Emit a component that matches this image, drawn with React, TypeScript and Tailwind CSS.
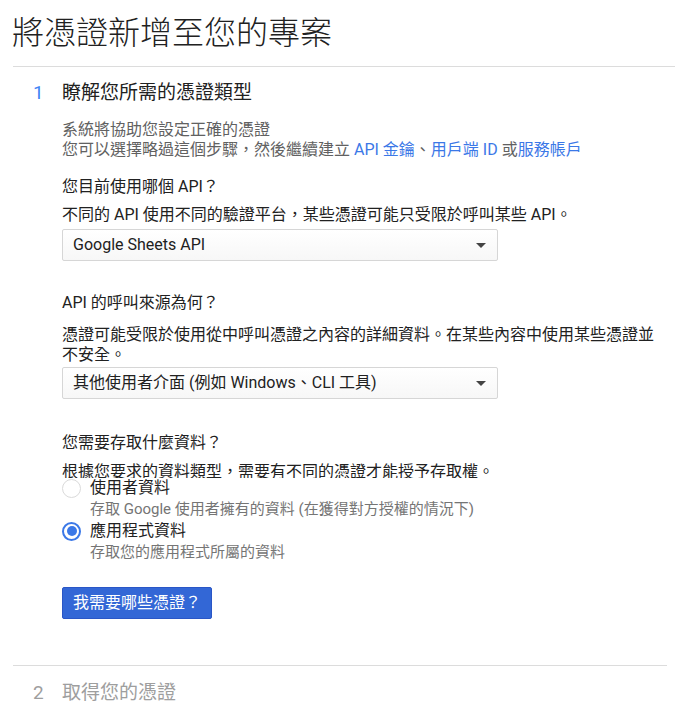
import React from "react";

const font = "font-['Roboto','Noto_Sans_CJK_TC',sans-serif]";

function Select({ value }: { value: string }) {
  return (
    <div className="flex h-[32px] w-[436px] items-center justify-between rounded-[2px] border border-[#d6d6d6] bg-linear-to-b from-white to-[#f7f7f7] pl-[10px] pr-[11px]">
      <span className="text-[16px] leading-[20px] text-[#212121]">{value}</span>
      <span className="h-0 w-0 border-x-[5px] border-t-[5px] border-x-transparent border-t-[#444]" />
    </div>
  );
}

function Radio({
  checked,
  label,
  hint,
}: {
  checked?: boolean;
  label: string;
  hint: string;
}) {
  return (
    <div className="relative bg-white">
      <div className="flex items-center">
        {checked ? (
          <span className="flex h-[19px] w-[19px] items-center justify-center rounded-full border-2 border-[#3b78e7]">
            <span className="h-[10px] w-[10px] rounded-full bg-[#3b78e7]" />
          </span>
        ) : (
          <span className="h-[19px] w-[19px] rounded-full border-[1.5px] border-[#dadada]" />
        )}
        <span className="ml-[9px] text-[16px] leading-[20px] text-[#212121]">{label}</span>
      </div>
      <div className="ml-[28px] mt-px text-[15px] leading-[20px] text-[#757575]">{hint}</div>
    </div>
  );
}

export default function App() {
  return (
    <div className={`${font} min-h-[711px] w-[675px] overflow-hidden bg-white`}>
      <div className="pl-3 pt-[13px]">
        <h1 className="text-[32px] font-light leading-[40px] text-[#212121]">將憑證新增至您的專案</h1>
      </div>

      <div className="ml-[13px] mt-[13px] border-t border-[#dcdcdc] pr-[8px]">
        <div className="flex pl-[20px] pt-[14px] leading-[24px]">
          <span className="w-[29px] text-[19px] text-[#4285f4]">1</span>
          <span className="text-[19px] text-[#212121]">瞭解您所需的憑證類型</span>
        </div>

        <div className="pl-[49px]">
          <div className="mt-[15px] text-[16px] leading-[20px] text-[#616161]">
            <div>系統將協助您設定正確的憑證</div>
            <div>
              您可以選擇略過這個步驟，然後繼續建立 <span className="text-[#3b78e7]">API 金鑰</span>、
              <span className="text-[#3b78e7]">用戶端 ID</span> 或
              <span className="text-[#3b78e7]">服務帳戶</span>
            </div>
          </div>

          <div className="mt-[17px] text-[16px] leading-[20px] text-[#212121]">您目前使用哪個 API？</div>
          <div className="mt-[8px] text-[16px] leading-[20px] text-[#212121]">
            不同的 API 使用不同的驗證平台，某些憑證可能只受限於呼叫某些 API。
          </div>
          <div className="mt-[4px]">
            <Select value="Google Sheets API" />
          </div>

          <div className="mt-[32px] text-[16px] leading-[20px] text-[#212121]">API 的呼叫來源為何？</div>
          <div className="mt-[12px] text-[16px] leading-[20px] text-[#212121]">
            憑證可能受限於使用從中呼叫憑證之內容的詳細資料。在某些內容中使用某些憑證並不安全。
          </div>
          <div className="mt-[2px]">
            <Select value="其他使用者介面 (例如 Windows、CLI 工具)" />
          </div>

          <div className="mt-[34px] text-[16px] leading-[20px] text-[#212121]">您需要存取什麼資料？</div>
          <div className="mt-[9px] text-[16px] leading-[20px] text-[#212121]">
            根據您要求的資料類型，需要有不同的憑證才能授予存取權。
          </div>

          <div className="-mt-[4px]">
            <Radio label="使用者資料" hint="存取 Google 使用者擁有的資料 (在獲得對方授權的情況下)" />
            <div className="mt-[2px]">
              <Radio checked label="應用程式資料" hint="存取您的應用程式所屬的資料" />
            </div>
          </div>

          <button className="mt-[25px] h-[32px] rounded-[2px] border border-[#2a56c6] bg-[#3367d6] px-[10px] text-[16px] leading-[20px] text-white">
            我需要哪些憑證？
          </button>
        </div>

        <div className="mt-[46px] border-t border-[#dcdcdc]">
          <div className="flex pl-[20px] pt-[15px] leading-[24px]">
            <span className="w-[29px] text-[19px] text-[#9e9e9e]">2</span>
            <span className="text-[19px] text-[#9e9e9e]">取得您的憑證</span>
          </div>
        </div>
      </div>
    </div>
  );
}
